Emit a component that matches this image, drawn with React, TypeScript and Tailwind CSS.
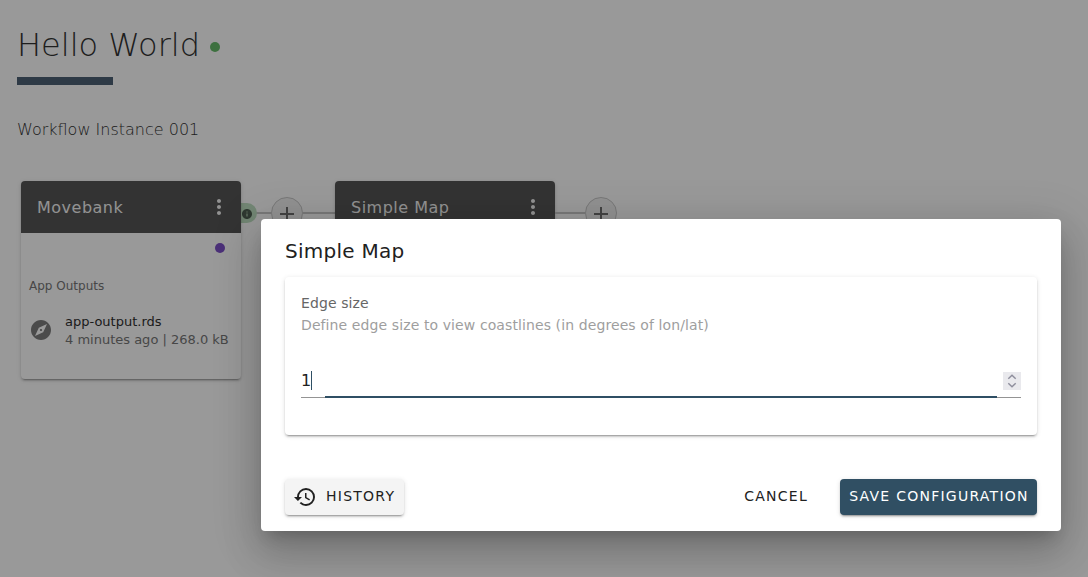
import React from 'react';

const cardShadow =
  'shadow-[0_3px_1px_-2px_rgba(0,0,0,0.2),0_2px_2px_0_rgba(0,0,0,0.14),0_1px_5px_0_rgba(0,0,0,0.12)]';

function AddConnector({ trailing = false }: { trailing?: boolean }) {
  return (
    <div className="flex h-16 items-center">
      <div className="h-[2px] w-[30px] bg-[#c8c8c8]" />
      <div className="flex h-8 w-8 items-center justify-center rounded-full border border-[#c8c8c8] bg-[#f2f2f2]">
        <svg viewBox="0 0 24 24" className="relative top-px h-6 w-6 fill-[#707070]">
          <path d="M19 13h-6v6h-2v-6H5v-2h6V5h2v6h6v2z" />
        </svg>
      </div>
      {!trailing && <div className="h-[2px] w-8 bg-[#c8c8c8]" />}
    </div>
  );
}

function AppCard({ title, children }: { title: string; children?: React.ReactNode }) {
  return (
    <div className={`h-[198px] w-[220px] shrink-0 rounded bg-white ${cardShadow}`}>
      <div className="flex h-[52px] items-center justify-between rounded-t bg-[#555] pl-4 pr-[10px] text-[#f4f4f4]">
        <span className="pt-0.5 text-base tracking-[0.5px]">{title}</span>
        <svg viewBox="0 0 24 24" className="h-6 w-6 fill-[#f4f4f4]">
          <path d="M12 8c1.1 0 2-.9 2-2s-.9-2-2-2-2 .9-2 2 .9 2 2 2zm0 2c-1.1 0-2 .9-2 2s.9 2 2 2 2-.9 2-2-.9-2-2-2zm0 6c-1.1 0-2 .9-2 2s.9 2 2 2 2-.9 2-2-.9-2-2-2z" />
        </svg>
      </div>
      {children}
    </div>
  );
}

function Workflow() {
  return (
    <main className="h-full bg-white pl-[17px] pt-6 text-[#333]">
      <div className="flex h-[42px] items-center">
        <h1 className="w-[185px] whitespace-nowrap text-[32px] font-extralight leading-[42px]">Hello World</h1>
        <span className="ml-2 mt-1 h-[10px] w-[10px] rounded-full bg-[#66bb6a]" />
      </div>
      <div className="mt-[11px] h-2 w-24 bg-[#4e6276]" />
      <h2 className="mt-[33px] text-base font-extralight leading-6">Workflow Instance 001</h2>
      <div className="ml-1 mt-[39px] flex items-start">
        <div className="relative">
          <div className="absolute left-[210px] top-[22px] flex h-5 w-[26px] items-center justify-end rounded-full bg-[#bfe0c1] pr-1">
            <svg viewBox="0 0 24 24" className="relative top-px h-3 w-3 fill-[#4e5f52]">
              <path d="M12 2C6.48 2 2 6.48 2 12s4.48 10 10 10 10-4.48 10-10S17.52 2 12 2zm1 15h-2v-6h2v6zm0-8h-2V7h2v2z" />
            </svg>
          </div>
          <div className="relative">
            <AppCard title="Movebank">
              <div className="flex justify-end pr-4 pt-[10px]">
                <span className="h-[10px] w-[10px] rounded-full bg-[#7d50c8]" />
              </div>
              <p className="mt-6 pl-2 text-xs leading-[18px] text-[#777]">App Outputs</p>
              <div className="mt-[18px] flex items-start pl-2">
                <svg viewBox="0 0 24 24" className="mt-[5px] h-6 w-6 shrink-0 fill-[#7d7d7d]">
                  <path d="M12 10.9c-.61 0-1.1.49-1.1 1.1s.49 1.1 1.1 1.1c.61 0 1.1-.49 1.1-1.1s-.49-1.1-1.1-1.1zM12 2C6.48 2 2 6.48 2 12s4.48 10 10 10 10-4.48 10-10S17.52 2 12 2zm2.19 12.19L6 18l3.81-8.19L18 6l-3.81 8.19z" />
                </svg>
                <div className="ml-3 whitespace-nowrap text-[13px] leading-[18px]">
                  <div className="text-[#303030]">app-output.rds</div>
                  <div className="text-[#777]">4 minutes ago | 268.0 kB</div>
                </div>
              </div>
            </AppCard>
          </div>
        </div>
        <AddConnector />
        <AppCard title="Simple Map" />
        <AddConnector trailing />
      </div>
    </main>
  );
}

function ConfigurationDialog() {
  return (
    <div
      role="dialog"
      className="ml-[261px] mt-[219px] flex h-[312px] w-[800px] flex-col rounded bg-white px-6 pb-4 pt-4 text-[#212121] shadow-[0_11px_15px_-7px_rgba(0,0,0,0.2),0_24px_38px_3px_rgba(0,0,0,0.14),0_9px_46px_8px_rgba(0,0,0,0.12)]"
    >
      <h2 className="text-xl leading-8 tracking-[0.25px]">Simple Map</h2>
      <section className={`mt-[10px] h-[158px] rounded px-4 pt-4 ${cardShadow}`}>
        <div className="text-sm leading-5 tracking-[0.1px] text-[#666]">Edge size</div>
        <div className="mt-0.5 text-sm leading-5 tracking-[0.1px] text-[#9e9e9e]">
          Define edge size to view coastlines (in degrees of lon/lat)
        </div>
        <div className="mt-[34px] flex h-6 items-center justify-between">
          <div className="-mt-0.5 flex items-center">
            <span className="text-base leading-[19px]">1</span>
            <span className="h-[19px] w-px bg-[#2f4f64]" />
          </div>
          <span className="flex h-[18px] w-[18px] items-center justify-center bg-[#e9e9ed]">
            <svg viewBox="0 0 18 18" className="h-[18px] w-[18px] fill-none stroke-[#8f8f9d] stroke-[1.5]">
              <path d="M5.3 6.7 9 3.3l3.7 3.4M5.3 11.3 9 14.7l3.7-3.4" />
            </svg>
          </span>
        </div>
        <div className="mt-[3px] flex h-[2px] items-end">
          <div className="h-px w-6 bg-[#949494]" />
          <div className="h-[2px] flex-1 bg-[#2f4f64]" />
          <div className="h-px w-6 bg-[#949494]" />
        </div>
      </section>
      <div className="mt-11 flex items-center text-sm tracking-[1.25px]">
        <button className={`flex h-9 w-[119px] items-center rounded bg-[#f4f4f4] pl-2 ${cardShadow}`}>
          <svg viewBox="0 0 24 24" className="mr-[9px] h-6 w-6 fill-[#212121]">
            <path d="M13 3a9 9 0 0 0-9 9H1l3.89 3.89.07.14L9 12H6c0-3.87 3.13-7 7-7s7 3.13 7 7-3.13 7-7 7c-1.93 0-3.68-.79-4.94-2.06l-1.42 1.42A8.954 8.954 0 0 0 13 21a9 9 0 0 0 0-18zm-1 5v5l4.28 2.54.72-1.21-3.5-2.08V8H12z" />
          </svg>
          <span className="pb-0.5">HISTORY</span>
        </button>
        <button className="ml-auto mr-8 pb-0.5">CANCEL</button>
        <button className={`h-9 w-[197px] whitespace-nowrap rounded bg-[#304f63] pb-0.5 pl-px text-white ${cardShadow}`}>
          SAVE CONFIGURATION
        </button>
      </div>
    </div>
  );
}

export default function App() {
  return (
    <div className="relative h-[577px] w-[1088px] overflow-hidden font-['DejaVu_Sans',sans-serif]">
      <Workflow />
      <div className="absolute inset-0 flex items-start bg-black/40">
        <ConfigurationDialog />
      </div>
    </div>
  );
}
